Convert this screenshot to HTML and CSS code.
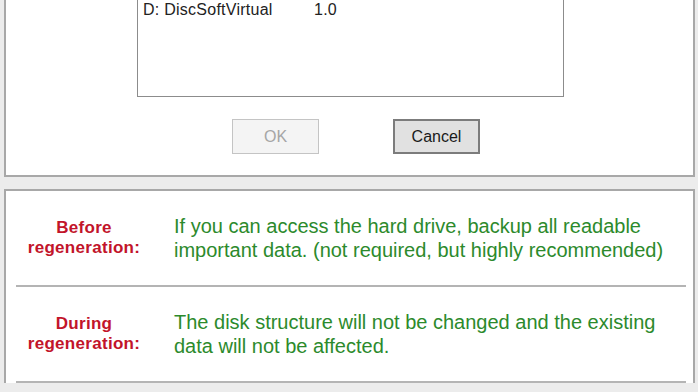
FILE: index.html
```html
<!DOCTYPE html>
<html lang="en">

<head>
    <meta charset="UTF-8">
    <meta name="viewport" content="width=device-width, initial-scale=1.0">
    <title>Regenerate Drive</title>
    <link rel="stylesheet" href="styles.css">
</head>

<body>
    <div class="window">
        <div class="panel panel-top">
            <div class="drive-list">
                <div class="drive-row">
                    <span class="drive-name">D: DiscSoftVirtual</span>
                    <span class="drive-ver">1.0</span>
                </div>
            </div>
            <div class="buttons">
                <button class="btn" disabled>OK</button>
                <button class="btn btn-cancel">Cancel</button>
            </div>
        </div>

        <div class="panel panel-notes">
            <div class="note">
                <div class="note-label">Before<br>regeneration:</div>
                <div class="note-text">If you can access the hard drive, backup all readable important data. (not required, but highly recommended)</div>
            </div>
            <div class="note">
                <div class="note-label">During<br>regeneration:</div>
                <div class="note-text">The disk structure will not be changed and the existing data will not be affected.</div>
            </div>
        </div>
    </div>
</body>

</html>
```

FILE: styles.css
```css
body {
    margin: 0;
    padding: 0;
    background-color: #ececec;
    font-family: "Liberation Sans", Arial, sans-serif;
    overflow: hidden;
}

.window {
    padding: 0 3px 0 4px;
}

.panel {
    background-color: #fff;
    border: 2px solid #a8a8a8;
    border-top-width: 1px;
}

/* Drive selection */
.panel-top {
    margin-top: -30px;
    padding: 0 0 21px 0;
    margin-bottom: 12px;
}

.drive-list {
    box-sizing: border-box;
    width: 427px;
    height: 126px;
    margin-left: 131px;
    padding: 28px 0 0 5px;
    border: 1px solid #8c8c8c;
}

.drive-row {
    display: flex;
    font-size: 16px;
    line-height: 19px;
    letter-spacing: 0.25px;
    color: #222;
}

.drive-name {
    width: 171px;
}

.buttons {
    display: flex;
    gap: 74px;
    padding-left: 226px;
    margin-top: 22px;
}

.btn {
    width: 87px;
    height: 35px;
    font-family: "Liberation Sans", Arial, sans-serif;
    font-size: 16px;
    background-color: #f4f4f4;
    border: 1px solid #c4c4c4;
    color: #a6a6a6;
    padding: 0;
}

.btn-cancel {
    background-color: #e1e1e1;
    border: 2px solid #7c7c7c;
    color: #1a1a1a;
}

/* Notes */
.panel-notes {
    border-top-width: 2px;
    border-bottom: none;
    padding: 0 7px 0 10px;
}

.note {
    box-sizing: border-box;
    height: 96px;
    display: flex;
    align-items: center;
    border-bottom: 2px solid #b4b4b4;
}

.note-label {
    width: 136px;
    text-align: center;
    font-size: 17px;
    line-height: 20px;
    letter-spacing: 0.3px;
    font-weight: bold;
    color: #c2142a;
}

.note-text {
    flex: 1;
    padding-left: 22px;
    font-size: 20px;
    line-height: 24px;
    color: #2c8a2c;
}
```
